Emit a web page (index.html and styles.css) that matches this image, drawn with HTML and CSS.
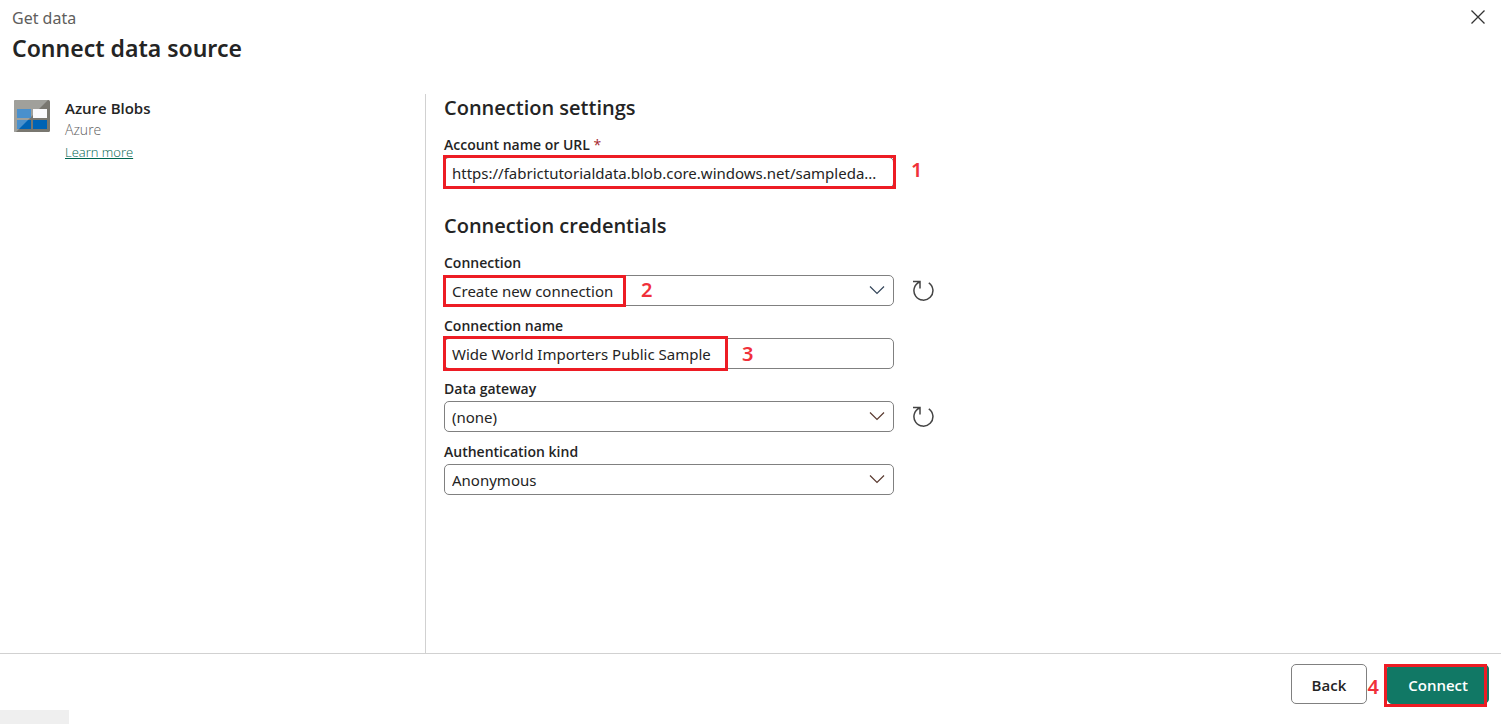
FILE: index.html
```html
<!DOCTYPE html>
<html lang="en">
<head>
<meta charset="utf-8">
<meta name="viewport" content="width=device-width, initial-scale=1">
<title>Connect data source</title>
<link rel="stylesheet" href="styles.css">
</head>
<body>
<div class="dialog">
  <header class="header">
    <div class="titles">
      <p class="eyebrow">Get data</p>
      <h1 class="title">Connect data source</h1>
    </div>
    <button class="icon-button close" type="button" aria-label="Close">
      <svg width="16" height="16" viewBox="0 0 16 16" fill="none" stroke="#333" stroke-width="1.3"><path d="M1.500 1.500 14.500 14.500M14.500 1.500 1.500 14.500"/></svg>
    </button>
  </header>

  <main class="body">
    <aside class="source">
      <svg class="source-icon" width="36" height="32" viewBox="0 0 36 32" aria-hidden="true">
        <path d="M1.500 0H34.500Q36 0 36 1.500V30.500Q36 32 34.500 32H1.500Q0 32 0 30.500V1.500Q0 0 1.500 0Z" fill="#797770"/>
        <path d="M1.500 0H34L2 32H1.500Q0 32 0 30.500V1.500Q0 0 1.500 0Z" fill="#a0a09b"/>
        <rect x="3" y="9" width="14" height="9" fill="#4a90cc"/>
        <rect x="19" y="9" width="14" height="9" fill="#fafafc"/>
        <rect x="3" y="20" width="14" height="9" fill="#0063b5"/>
        <rect x="19" y="20" width="14" height="9" fill="#0063b5"/>
        <path d="M3 20H14L5 29H3Z" fill="#4a90cc"/>
      </svg>
      <div class="source-text">
        <h2 class="source-name">Azure Blobs</h2>
        <p class="source-kind">Azure</p>
        <a class="source-link" href="#">Learn more</a>
      </div>
    </aside>

    <form class="form" id="connection-form">
      <section class="group">
        <h2 class="group-title">Connection settings</h2>
        <div class="field">
          <label class="label" for="account">Account name or URL <span class="required">*</span></label>
          <div class="control">
            <input class="input" id="account" type="text" value="https://fabrictutorialdata.blob.core.windows.net/sampleda...">
            <span class="mark mark-account"></span>
            <span class="step step-account">1</span>
          </div>
        </div>
      </section>

      <section class="group">
        <h2 class="group-title">Connection credentials</h2>
        <div class="fields">
          <div class="field">
            <label class="label" for="connection">Connection</label>
            <div class="row">
              <div class="control">
                <select class="input" id="connection"><option>Create new connection</option></select>
                <svg class="chevron" width="16" height="10" viewBox="0 0 16 10" fill="none" stroke="#34465a" stroke-width="1.200"><path d="M1 1.500 8 8.500 15 1.500"/></svg>
                <span class="mark mark-connection"></span>
                <span class="step step-connection">2</span>
              </div>
              <button class="icon-button" type="button" aria-label="Refresh connections">
                <svg width="22" height="22" viewBox="0 0 22 22" fill="none" stroke="#444" stroke-width="1.500"><path d="M16.800 2.800A9.500 9.500 0 1 1 7.500 2M1 1.500H8V8.500"/></svg>
              </button>
            </div>
          </div>
          <div class="field">
            <label class="label" for="name">Connection name</label>
            <div class="control">
              <input class="input" id="name" type="text" value="Wide World Importers Public Sample">
              <span class="mark mark-name"></span>
              <span class="step step-name">3</span>
            </div>
          </div>
          <div class="field">
            <label class="label" for="gateway">Data gateway</label>
            <div class="row">
              <div class="control">
                <select class="input" id="gateway"><option>(none)</option></select>
                <svg class="chevron" width="16" height="10" viewBox="0 0 16 10" fill="none" stroke="#5a3a30" stroke-width="1.200"><path d="M1 1.500 8 8.500 15 1.500"/></svg>
              </div>
              <button class="icon-button" type="button" aria-label="Refresh gateways">
                <svg width="22" height="22" viewBox="0 0 22 22" fill="none" stroke="#444" stroke-width="1.500"><path d="M16.800 2.800A9.500 9.500 0 1 1 7.500 2M1 1.500H8V8.500"/></svg>
              </button>
            </div>
          </div>
          <div class="field">
            <label class="label" for="auth">Authentication kind</label>
            <div class="control">
              <select class="input" id="auth"><option>Anonymous</option></select>
              <svg class="chevron" width="16" height="10" viewBox="0 0 16 10" fill="none" stroke="#5a3a30" stroke-width="1.200"><path d="M1 1.500 8 8.500 15 1.500"/></svg>
            </div>
          </div>
        </div>
      </section>
    </form>
  </main>

  <footer class="footer">
    <button class="button" type="button">Back</button>
    <div class="connect">
      <button class="button button-primary" type="submit" form="connection-form">Connect</button>
      <span class="mark mark-connect"></span>
      <span class="step step-connect">4</span>
    </div>
  </footer>
  <div class="status"></div>
</div>
</body>
</html>
```

FILE: styles.css
```css
* { box-sizing: border-box; }

body {
  margin: 0;
  background: #fff;
  color: #242424;
  font: 15px/20px "Open Sans", "Noto Sans", sans-serif;
}

h1, h2, p { margin: 0; }

.dialog {
  position: relative;
  display: flex;
  flex-direction: column;
  min-height: 100vh;
}

.header {
  display: flex;
  justify-content: space-between;
  align-items: flex-start;
  padding: 8px 12px 30px;
}

.eyebrow {
  color: #605e5c;
  font-family: "Noto Sans", sans-serif;
  font-size: 16px;
  line-height: 20px;
}

.title {
  padding-top: 4px;
  font-family: "Noto Sans", sans-serif;
  font-size: 23px;
  font-weight: 600;
  line-height: 32px;
}

.icon-button {
  display: flex;
  padding: 0;
  border: 0;
  background: none;
  cursor: pointer;
}

.close { padding: 1px 3px; }

.body {
  flex: 1;
  display: grid;
  grid-template-columns: 425px 1fr;
}

.source {
  display: flex;
  align-items: flex-start;
  gap: 15px;
  padding: 3px 14px;
}

.source-icon { margin-top: 3px; }

.source-name {
  font-size: 15px;
  font-weight: 600;
  line-height: 22px;
}

.source-kind {
  color: #606060;
  font-size: 14px;
  font-weight: 300;
  line-height: 22px;
}

.source-link {
  color: #006650;
  font-size: 13px;
  font-weight: 300;
  line-height: 22px;
}

.form {
  display: flex;
  flex-direction: column;
  gap: 24px;
  padding: 0 18px;
  border-left: 1px solid #d1d1d1;
}

.group {
  display: flex;
  flex-direction: column;
  gap: 13px;
}

.group-title {
  font-size: 20px;
  font-weight: 600;
  line-height: 28px;
}

.fields {
  display: flex;
  flex-direction: column;
  gap: 10px;
}

.field {
  display: flex;
  flex-direction: column;
  gap: 2px;
}

.label {
  font-size: 14px;
  font-weight: 600;
}

.required { color: #a4262c; font-weight: 400; }

.row {
  display: flex;
  align-items: center;
  gap: 18px;
}

.control {
  position: relative;
  width: 100%;
  max-width: 450px;
}

.input {
  display: block;
  width: 100%;
  height: 31px;
  padding: 0 7px;
  border: 1px solid #808080;
  border-radius: 5px;
  background: #fff;
  color: #242424;
  font: 15px/20px "Noto Sans", sans-serif;
  appearance: none;
}

.chevron {
  position: absolute;
  top: 10px;
  right: 9px;
  pointer-events: none;
}

.mark {
  position: absolute;
  border: 3px solid #ed1c24;
  pointer-events: none;
}

.mark-account { inset: -2px -2px -1px -1px; }
.mark-connection { inset: 0 auto -1px -1px; width: 183px; }
.mark-name { inset: -2px auto -2px -1px; width: 285px; }
.mark-connect { inset: 0 2px -3px -3px; }

.step {
  position: absolute;
  color: #f0303a;
  font-family: "Noto Sans", sans-serif;
  font-size: 20px;
  font-weight: 600;
  line-height: 28px;
}

.step-account { top: -1px; left: 467px; }
.step-connection { top: 1px; left: 197px; }
.step-name { top: 2px; left: 298px; }
.step-connect { top: 9px; right: 110px; }

.footer {
  display: flex;
  justify-content: flex-end;
  gap: 20px;
  padding: 10px 12px 20px;
  border-top: 1px solid #d1d1d1;
}

.connect { position: relative; }

.button {
  height: 40px;
  padding: 2px 20px 0;
  border: 1px solid #808080;
  border-radius: 5px;
  background: #fff;
  color: #242424;
  font: inherit;
  font-weight: 600;
}

.button-primary {
  border-color: #117865;
  background: #117865;
  color: #fff;
}

.status {
  position: absolute;
  bottom: 0;
  left: 0;
  width: 69px;
  height: 14px;
  background: #efefef;
}
```
